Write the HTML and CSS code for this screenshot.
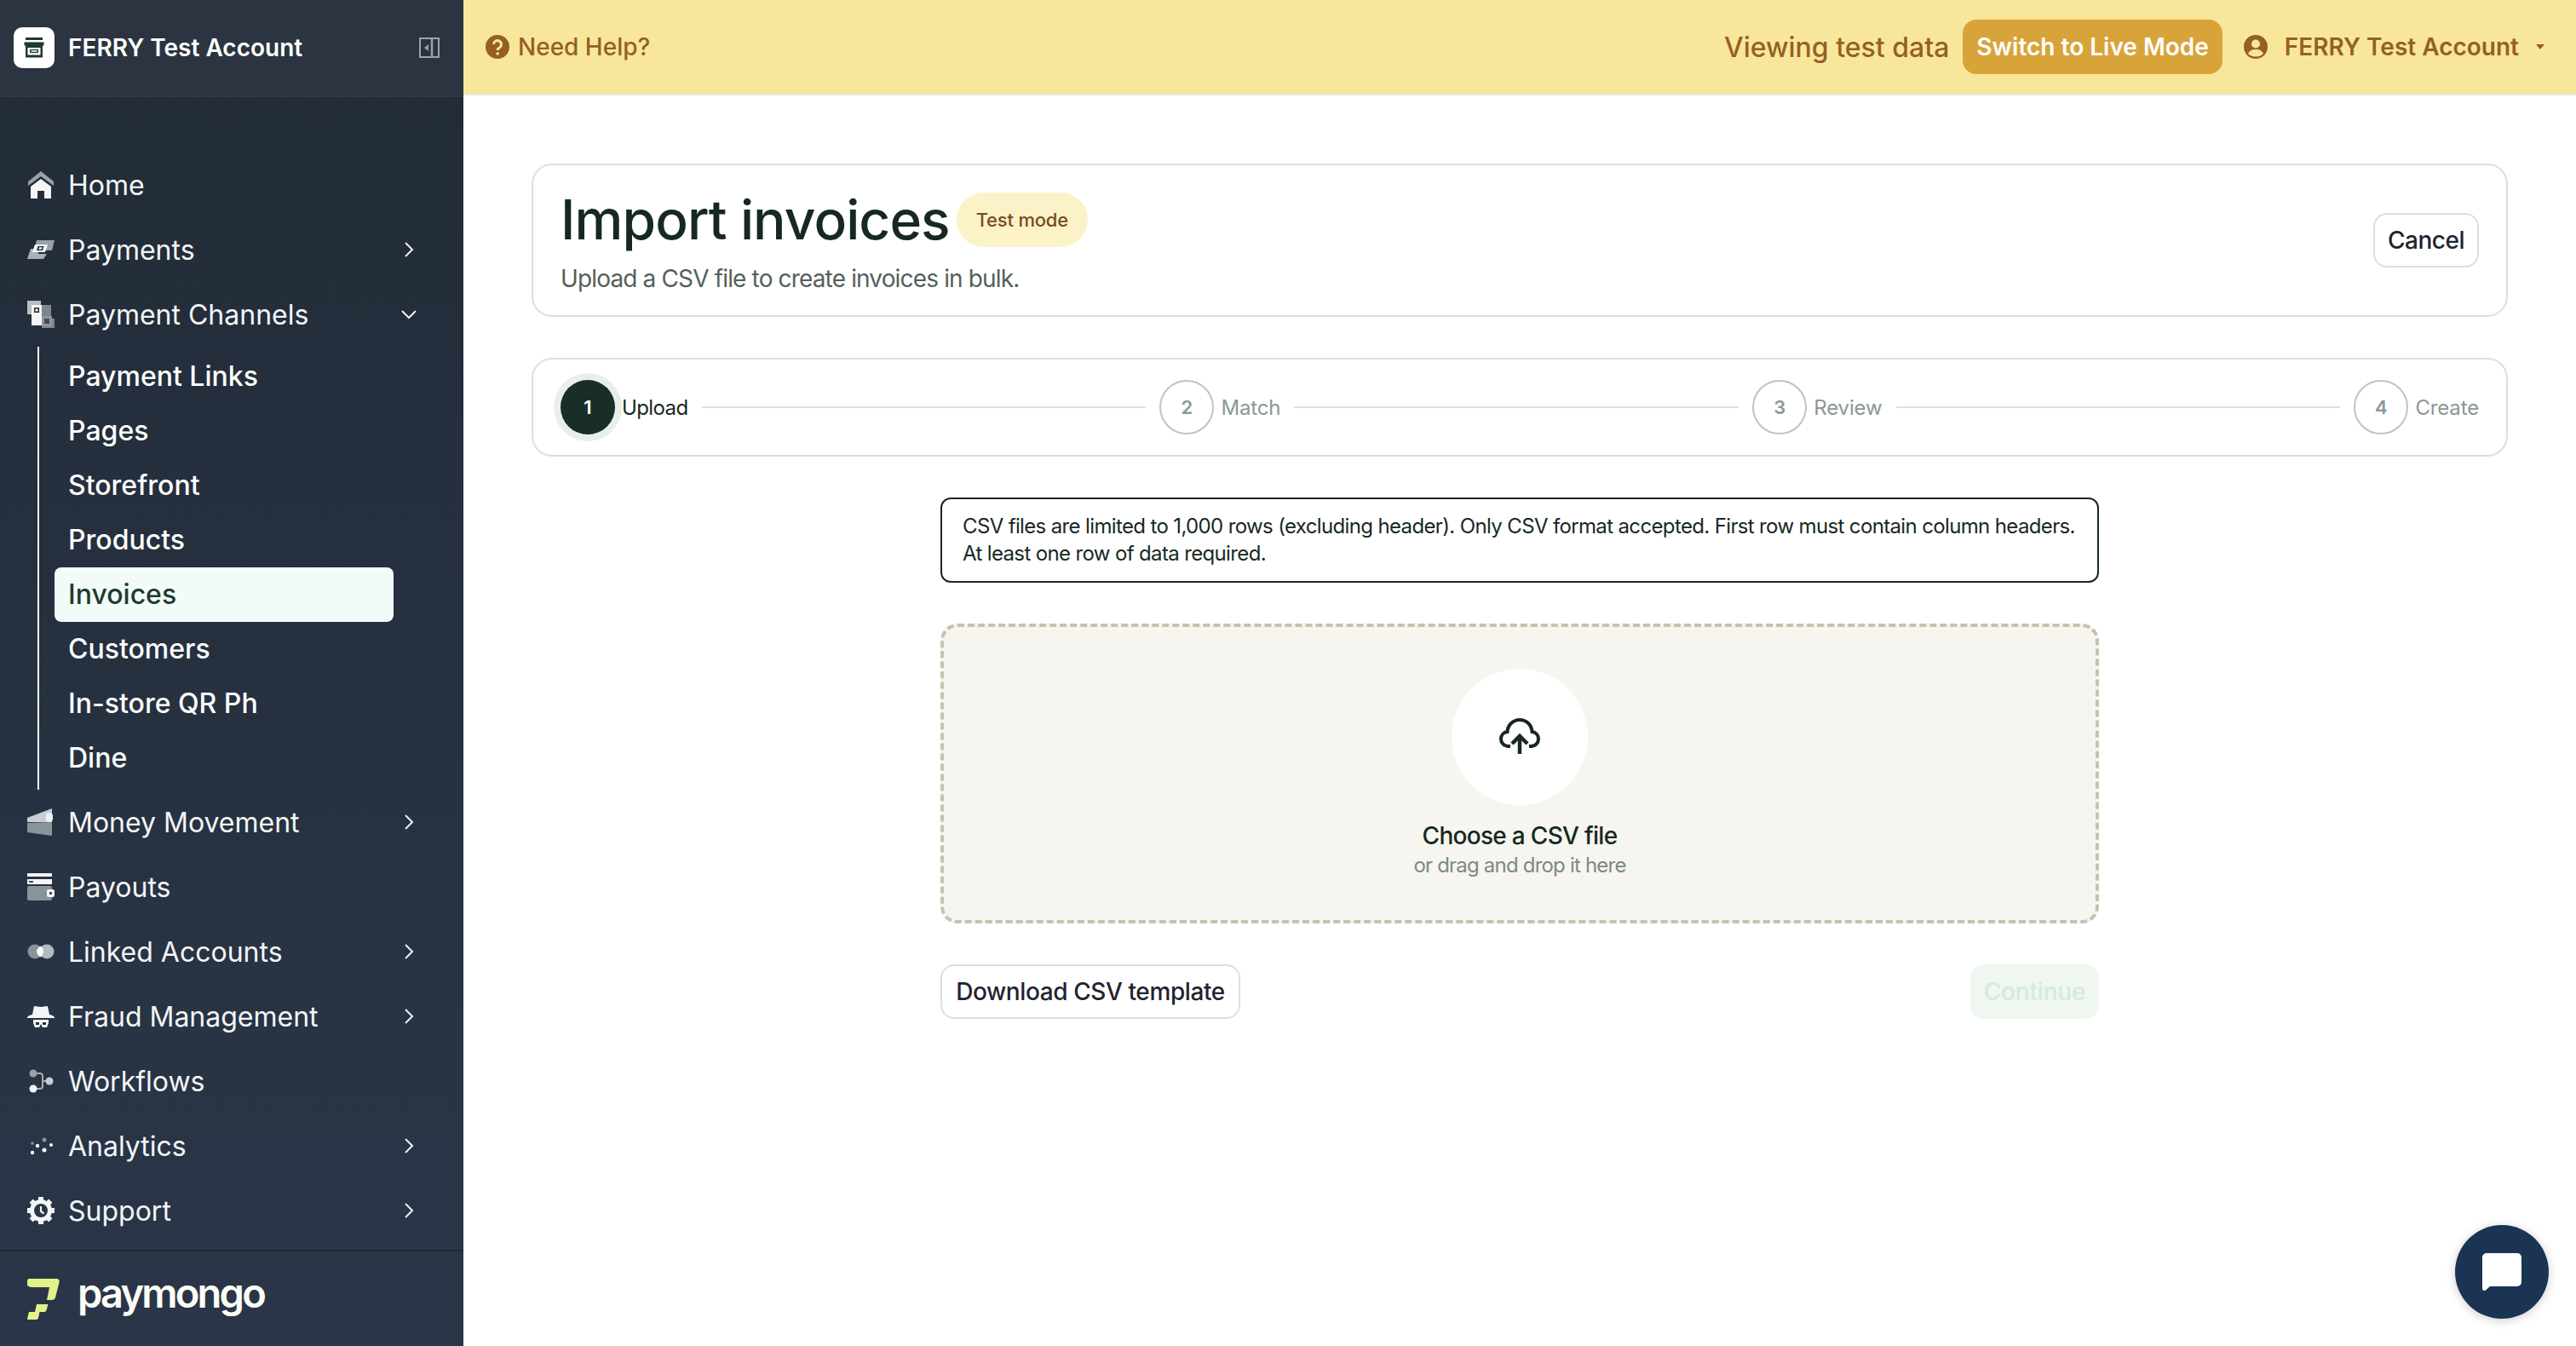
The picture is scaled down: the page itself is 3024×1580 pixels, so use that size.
FILE: index.html
```html
<!DOCTYPE html>
<html lang="en">
<head>
<meta charset="utf-8">
<title>Import invoices</title>
<link rel="stylesheet" href="styles.css">
</head>
<body>
<aside class="sidebar">
  <div class="side-head">
    <span class="store-badge">
      <svg width="26" height="26" viewBox="0 0 26 26"><path d="M3 1h20v3H3z" fill="#1d3b30"/><path d="M1.500 6.500h23v4h-1.500v14H3v-14H1.500z" fill="#1d3b30"/><path d="M5.500 13h15v8.500h-15z" fill="#fff"/><path d="M8 15h10v4H8z" fill="#1d3b30"/><path d="M9.500 16.200h7v1.600h-7z" fill="#fff"/></svg>
    </span>
    <span class="acct-name">FERRY Test Account</span>
    <svg class="collapse" width="24" height="24" viewBox="0 0 24 24"><rect x="1" y="1" width="22" height="22" fill="none" stroke="#9ea3ab" stroke-width="2"/><path d="M15 1v22" stroke="#9ea3ab" stroke-width="2.500"/><path d="M11 8v8l-5-4z" fill="#9ea3ab"/></svg>
  </div>
  <nav class="nav">
    <a class="row">
      <svg class="ico" width="32" height="32" viewBox="0 0 32 32"><path d="M16 0 31 12v5L16 6 1 17v-5z" fill="#98a1a7"/><path d="M16 9 28 18v14h-8v-9h-8v9H4V18z" fill="#f4f5f6"/></svg>
      <span class="lbl">Home</span>
    </a>
    <a class="row">
      <svg class="ico" width="32" height="32" viewBox="0 0 32 32"><path d="M11 5h21l-3 12H17l1-4h-9z" fill="#98a1a7"/><path d="M4 15h8l1 6h10l-4 6H0z" fill="#aab0b5"/><path d="M9 10h15l-3 9H6z" fill="#f4f5f6"/><path d="M12.500 12h7l-1.500 5h-7z" fill="#232d3a"/><path d="M14 13.300h3.500l-.7 2.400h-3.500z" fill="#f4f5f6"/></svg>
      <span class="lbl">Payments</span>
      <svg class="chev" width="24" height="24" viewBox="0 0 24 24"><path d="m8 4 8 8-8 8" fill="none" stroke="#eef0f2" stroke-width="2"/></svg>
    </a>
    <a class="row">
      <svg class="ico" width="32" height="32" viewBox="0 0 32 32"><path d="M0 0h16v5H5v11H0z" fill="#b9bec3"/><path d="M5 5h12v12H5z" fill="#f4f5f6"/><path d="M8 8h6v6H8z" fill="#232d3a"/><path d="M9.500 9.500h3v3h-3z" fill="#f4f5f6"/><path d="M17 5h11v16H17z" fill="#7d868e"/><path d="M5 17h12v12H5z" fill="#f4f5f6"/><path d="M17 21h15v11H17z" fill="#7d868e"/><path d="M17 18h12v12H17z" fill="#8f979d"/><path d="M20 21h6v6h-6z" fill="#414b56"/></svg>
      <span class="lbl">Payment Channels</span>
      <svg class="chev" width="24" height="24" viewBox="0 0 24 24"><path d="m4 8 8 8 8-8" fill="none" stroke="#eef0f2" stroke-width="2"/></svg>
    </a>
    <div class="subnav">
      <a class="sub">Payment Links</a>
      <a class="sub">Pages</a>
      <a class="sub">Storefront</a>
      <a class="sub">Products</a>
      <a class="sub sub-active">Invoices</a>
      <a class="sub">Customers</a>
      <a class="sub">In-store QR Ph</a>
      <a class="sub">Dine</a>
    </div>
    <a class="row">
      <svg class="ico" width="32" height="32" viewBox="0 0 32 32"><path d="M0 11 29 0v16H0z" fill="#c9cdd1"/><path d="M0 28V17l29-1v16z" fill="#89939a"/><rect x="22" y="5" width="8" height="11" rx="4" fill="#eef0f2"/></svg>
      <span class="lbl">Money Movement</span>
      <svg class="chev" width="24" height="24" viewBox="0 0 24 24"><path d="m8 4 8 8-8 8" fill="none" stroke="#eef0f2" stroke-width="2"/></svg>
    </a>
    <a class="row">
      <svg class="ico" width="32" height="32" viewBox="0 0 32 32"><path d="M0 0h29v4H0z" fill="#f4f5f6"/><path d="M0 7h29v6H0z" fill="#f4f5f6"/><path d="M2 9h5v2H2z" fill="#414b56"/><rect y="15" width="29" height="17" rx="2" fill="#89939a"/><rect x="23" y="19" width="9" height="9" rx="2" fill="#f4f5f6"/><rect x="26" y="22" width="3" height="3" fill="#414b56"/></svg>
      <span class="lbl">Payouts</span>
    </a>
    <a class="row">
      <svg class="ico" width="32" height="32" viewBox="0 0 32 32"><circle cx="9" cy="16" r="8.500" fill="#89939a"/><circle cx="23" cy="16" r="8.500" fill="#b4b9be"/><path d="M16 9.500a8.500 8.500 0 0 1 0 13 8.500 8.500 0 0 1-5-6.500 8.500 8.500 0 0 1 5-6.500z" fill="#f8f9fa"/></svg>
      <span class="lbl">Linked Accounts</span>
      <svg class="chev" width="24" height="24" viewBox="0 0 24 24"><path d="m8 4 8 8-8 8" fill="none" stroke="#eef0f2" stroke-width="2"/></svg>
    </a>
    <a class="row">
      <svg class="ico" width="32" height="32" viewBox="0 0 32 32"><path d="M8 4c3 0 5 1 8 1s5-1 8-1l2 10c3 .6 5 1.500 6 3v1H0v-1c1-1.500 3-2.400 6-3z" fill="#f4f5f6"/><path d="M7 20h18v4l-2 5h-5l-2-4-2 4H9l-2-5z" fill="#f4f5f6"/><path d="M10 23h4v3h-4zM18 23h4v3h-4z" fill="#26313e"/></svg>
      <span class="lbl">Fraud Management</span>
      <svg class="chev" width="24" height="24" viewBox="0 0 24 24"><path d="m8 4 8 8-8 8" fill="none" stroke="#eef0f2" stroke-width="2"/></svg>
    </a>
    <a class="row">
      <svg class="ico" width="32" height="32" viewBox="0 0 32 32"><path d="M7 7h8c2 0 3 1 3 3v12c0 2-1 3-3 3H7M18 16h8" fill="none" stroke="#a7adb2" stroke-width="2"/><circle cx="7" cy="7" r="4.500" fill="#98a1a7"/><circle cx="7" cy="25" r="4.500" fill="#f4f5f6"/><circle cx="26" cy="16" r="4.500" fill="#c9cdd1"/></svg>
      <span class="lbl">Workflows</span>
    </a>
    <a class="row">
      <svg class="ico" width="32" height="32" viewBox="0 0 32 32"><circle cx="20" cy="9" r="2.500" fill="#89939a"/><circle cx="6" cy="13" r="1.800" fill="#89939a"/><circle cx="12" cy="16" r="2.200" fill="#f4f5f6"/><circle cx="28" cy="15" r="2" fill="#f4f5f6"/><circle cx="20" cy="21" r="2.500" fill="#f4f5f6"/><circle cx="6" cy="24" r="2.200" fill="#f4f5f6"/></svg>
      <span class="lbl">Analytics</span>
      <svg class="chev" width="24" height="24" viewBox="0 0 24 24"><path d="m8 4 8 8-8 8" fill="none" stroke="#eef0f2" stroke-width="2"/></svg>
    </a>
    <a class="row">
      <svg class="ico" width="32" height="32" viewBox="0 0 32 32"><circle cx="16" cy="16" r="10.500" fill="none" stroke="#f4f5f6" stroke-width="5"/><path d="M16 0v6M16 26v6M0 16h6M26 16h6M4.700 4.700l4.200 4.200M23.100 23.100l4.200 4.200M4.700 27.300l4.200-4.200M23.100 8.900l4.200-4.200" stroke="#f4f5f6" stroke-width="6"/><path d="M16 11v6l3.500 2.500" fill="none" stroke="#f4f5f6" stroke-width="2.200"/></svg>
      <span class="lbl">Support</span>
      <svg class="chev" width="24" height="24" viewBox="0 0 24 24"><path d="m8 4 8 8-8 8" fill="none" stroke="#eef0f2" stroke-width="2"/></svg>
    </a>
  </nav>
  <div class="side-foot">
    <svg class="mark" width="38" height="48" viewBox="0 0 38 48"><path d="M2 0h32c3 0 4 2 3.500 4.500L33 22c-.5 2-2 3-4 3H23l1-5 2-10H3.500L0 8V2c0-1 1-2 2-2z" fill="#e2f18a"/><path d="M11 30h13.500l-2 7c-.4 1.500-1.500 2-3 2h-5l-1.500 7c-.3 1.500-1.500 2-3 2H1c-1 0-1-1-1-1l2-8h7z" fill="#e2f18a"/></svg>
    <span class="wordmark">paymongo</span>
  </div>
</aside>
<div class="page">
  <header class="topbar">
    <div class="help">
      <svg width="28" height="28" viewBox="0 0 28 28"><circle cx="14" cy="14" r="14" fill="#955f27"/><path d="M9.500 11a4.500 4.500 0 1 1 7 3.800c-1.600 1-2.300 1.700-2.300 3.200" fill="none" stroke="#f8e79b" stroke-width="3"/><circle cx="14.200" cy="22" r="1.800" fill="#f8e79b"/></svg>
      <span>Need Help?</span>
    </div>
    <div class="top-right">
      <span class="viewing">Viewing test data</span>
      <button class="live">Switch to Live Mode</button>
      <div class="acct">
        <svg width="28" height="28" viewBox="0 0 28 28"><circle cx="14" cy="14" r="14" fill="#955f27"/><circle cx="14" cy="10.500" r="5" fill="#f8e79b"/><path d="M5 22c2-4 5-5 9-5s7 1 9 5c-2.500 2.500-5.500 3.500-9 3.500S7.500 24.500 5 22z" fill="#f8e79b"/></svg>
        <span class="acct-top">FERRY Test Account</span>
        <svg class="caret" width="10" height="6" viewBox="0 0 10 6"><path d="M0 0h10L5 6z" fill="#955f27"/></svg>
      </div>
    </div>
  </header>
  <main class="content">
    <section class="card head-card">
      <div class="head-text">
        <div class="title-row">
          <h1 class="title">Import invoices</h1>
          <span class="badge">Test mode</span>
        </div>
        <p class="subtitle">Upload a CSV file to create invoices in bulk.</p>
      </div>
      <button class="btn btn-cancel">Cancel</button>
    </section>
    <section class="card stepper">
      <div class="step">
        <span class="dot dot-on">1</span><span class="step-lbl step-lbl-on">Upload</span>
      </div>
      <span class="line"></span>
      <div class="step">
        <span class="dot">2</span><span class="step-lbl">Match</span>
      </div>
      <span class="line"></span>
      <div class="step">
        <span class="dot">3</span><span class="step-lbl">Review</span>
      </div>
      <span class="line"></span>
      <div class="step">
        <span class="dot">4</span><span class="step-lbl">Create</span>
      </div>
    </section>
    <div class="column">
      <div class="notice">CSV files are limited to 1,000 rows (excluding header). Only CSV format accepted. First row must contain column headers.<br>At least one row of data required.</div>
      <div class="drop">
        <span class="circle">
          <svg width="48" height="44" viewBox="0 0 48 44"><path d="M13 33H11C5.500 33 2 29 2 24.500 2 20 5 16.500 9.500 16 10 8 16 2 24 2s14 6 14.500 14C43 16.500 46 20 46 24.500 46 29 42.500 33 37 33h-2" fill="none" stroke="#16291f" stroke-width="4"/><path d="M24 42V23" stroke="#16291f" stroke-width="4.500"/><path d="m15 30 9-9 9 9" fill="none" stroke="#16291f" stroke-width="4.500"/></svg>
        </span>
        <span class="drop-title">Choose a CSV file</span>
        <span class="drop-sub">or drag and drop it here</span>
      </div>
      <div class="actions">
        <button class="btn btn-dl">Download CSV template</button>
        <button class="btn btn-continue">Continue</button>
      </div>
    </div>
  </main>
</div>
<button class="chat">
  <svg width="46" height="44" viewBox="0 0 46 44"><path d="M5 0h36a5 5 0 0 1 5 5v29a5 5 0 0 1-5 5H9l-5 4.500c-1.500 1-4 .5-4-2V5a5 5 0 0 1 5-5z" fill="#fff"/></svg>
</button>
</body>
</html>
```

FILE: styles.css
```css
* { box-sizing: border-box; }
html, body { height: 100%; }
body {
  margin: 0;
  display: flex;
  overflow: hidden;
  background: #fff;
  font-family: "Inter", "Liberation Sans", sans-serif;
  color: #16291f;
}
button { font-family: inherit; cursor: pointer; }

.sidebar {
  width: 544px;
  flex: none;
  display: flex;
  flex-direction: column;
  background: linear-gradient(#222b37, #2a3648);
  color: #f4f5f6;
}
.side-head {
  height: 114px;
  flex: none;
  display: flex;
  align-items: flex-start;
  padding: 32px 28px 0 16px;
  background: #2b3440;
  border-bottom: 2px solid #2f3a48;
}
.store-badge {
  width: 48px;
  height: 48px;
  border-radius: 10px;
  background: #fff;
  display: flex;
  align-items: center;
  justify-content: center;
}
.acct-name {
  margin-left: 16px;
  flex: 1;
  font-size: 28px;
  line-height: 48px;
  font-weight: 600;
  color: #fff;
}
.collapse { margin-top: 12px; }

.nav { flex: 1; padding-top: 65px; }
.row {
  height: 76px;
  display: flex;
  align-items: center;
  padding: 0 52px 0 32px;
}
.ico { flex: none; }
.lbl {
  flex: 1;
  margin-left: 16px;
  padding-top: 2px;
  font-size: 32px;
  line-height: 48px;
}
.chev { flex: none; }
.subnav {
  margin-left: 44px;
  height: 520px;
  padding: 3px 0 0 18px;
  border-left: 2px solid #fff;
}
.sub {
  display: block;
  width: 398px;
  height: 64px;
  padding-left: 16px;
  font-size: 32px;
  font-weight: 500;
  line-height: 64px;
  color: #fff;
  border-radius: 8px;
}
.sub-active {
  background: #f2fbf8;
  color: #1d3b30;
}
.side-foot {
  height: 113px;
  flex: none;
  display: flex;
  align-items: center;
  gap: 21px;
  padding: 0 0 14px 32px;
  border-top: 2px solid #202833;
}
.mark { margin-top: 14px; flex: none; }
.wordmark {
  font-size: 47px;
  font-weight: 600;
  letter-spacing: -2.8px;
  line-height: 48px;
  color: #fdfdf7;
}

.page {
  flex: 1;
  min-width: 0;
  display: flex;
  flex-direction: column;
}
.topbar {
  height: 112px;
  flex: none;
  display: flex;
  align-items: center;
  justify-content: space-between;
  padding: 0 37px 0 26px;
  background: #f8e79b;
  border-bottom: 2px solid #e5e7eb;
  color: #955f27;
}
.help {
  display: flex;
  align-items: center;
  gap: 10px;
  font-size: 28px;
  font-weight: 500;
}
.top-right { display: flex; align-items: center; }
.viewing { font-size: 32px; font-weight: 500; }
.live {
  height: 64px;
  margin: 0 25px 0 16px;
  padding: 0 16px;
  border: 0;
  border-radius: 16px;
  background: #d8a43a;
  color: #fff;
  font-size: 28px;
  font-weight: 600;
}
.acct { display: flex; align-items: center; }
.acct-top {
  margin: 0 20px;
  font-size: 28px;
  font-weight: 600;
}

.content {
  flex: 1;
  padding: 80px 80px 0;
  display: flex;
  flex-direction: column;
  gap: 48px;
}
.card {
  border: 2px solid #e2dfd3;
  border-radius: 24px;
  background: #fff;
  display: flex;
  align-items: center;
}
.head-card {
  height: 180px;
  justify-content: space-between;
  padding: 0 32px;
}
.head-text { padding-top: 10px; }
.title-row { display: flex; align-items: center; gap: 8px; }
.title {
  margin: 0;
  font-size: 64px;
  font-weight: 500;
  letter-spacing: -.9px;
  line-height: 64px;
  color: #16291f;
}
.badge {
  height: 64px;
  padding: 0 23px;
  display: flex;
  align-items: center;
  border-radius: 32px;
  background: #fbf2c8;
  color: #7a4b1c;
  font-size: 22px;
  font-weight: 500;
  letter-spacing: -.2px;
}
.subtitle {
  margin: 16px 0 0;
  font-size: 28px;
  letter-spacing: -.85px;
  line-height: 42px;
  color: #555f5b;
}
.btn {
  height: 64px;
  border: 2px solid #e2dfd3;
  border-radius: 16px;
  background: #fff;
  color: #1f2430;
  font-size: 28px;
  font-weight: 500;
}
.btn-cancel { width: 124px; padding: 0; letter-spacing: -.5px; }

.stepper {
  height: 116px;
  padding: 0 32px;
}
.step { display: flex; align-items: center; gap: 8px; }
.dot {
  width: 64px;
  height: 64px;
  border-radius: 50%;
  display: flex;
  align-items: center;
  justify-content: center;
  border: 2px solid #c5c2b6;
  color: #8b9894;
  font-size: 22px;
  font-weight: 600;
}
.dot-on {
  border: 0;
  background: #182e27;
  color: #fff;
  box-shadow: 0 0 0 8px #e8eeeb;
}
.step-lbl { font-size: 24px; letter-spacing: -.15px; color: #8b9894; }
.step-lbl-on { color: #16291f; letter-spacing: -.6px; }
.line {
  flex: 1;
  height: 2px;
  margin: 0 16px;
  background: #e2dfd3;
}

.column {
  width: 1360px;
  align-self: center;
  display: flex;
  flex-direction: column;
  gap: 48px;
}
.notice {
  height: 100px;
  padding: 16px 24px;
  border: 2px solid #16291f;
  border-radius: 12px;
  font-size: 24px;
  letter-spacing: -.64px;
  line-height: 32px;
  white-space: nowrap;
  color: #16291f;
}
.drop {
  height: 352px;
  display: flex;
  flex-direction: column;
  align-items: center;
  padding-top: 49px;
  border: 4px dashed #c5c2b0;
  border-radius: 20px;
  background: #f6f5f0;
}
.circle {
  width: 160px;
  height: 160px;
  flex: none;
  border-radius: 50%;
  background: #fff;
  display: flex;
  align-items: center;
  justify-content: center;
}
.drop-title {
  margin-top: 18px;
  font-size: 28px;
  letter-spacing: -.7px;
  line-height: 36px;
  font-weight: 500;
}
.drop-sub {
  margin-top: -1px;
  font-size: 24px;
  letter-spacing: -.8px;
  line-height: 36px;
  color: #7c8a85;
}
.actions { display: flex; justify-content: space-between; }
.btn-dl { width: 352px; padding: 0; letter-spacing: -.4px; }
.btn-continue {
  width: 151px;
  padding: 0;
  border: 0;
  background: #eff7f0;
  color: #d5ebd6;
  letter-spacing: -.2px;
}
.chat {
  position: fixed;
  right: 32px;
  bottom: 32px;
  width: 110px;
  height: 110px;
  border: 0;
  border-radius: 50%;
  background: #1c3454;
  box-shadow: 0 2px 12px rgba(0,0,0,.2);
  display: flex;
  align-items: center;
  justify-content: center;
}
```
